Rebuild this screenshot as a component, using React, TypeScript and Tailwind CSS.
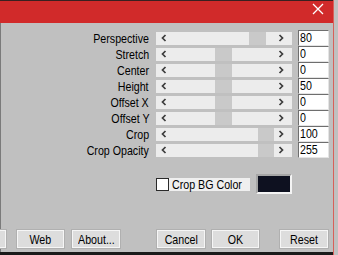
import React from "react";

const FONT = { fontFamily: '"Liberation Sans", Arial, sans-serif' };

type Row = { label: string; value: string; thumb: number; w: number };
const rows: Row[] = [
  { label: "Perspective", value: "80", thumb: 75, w: 17 },
  { label: "Stretch", value: "0", thumb: 41, w: 17 },
  { label: "Center", value: "0", thumb: 41, w: 17 },
  { label: "Height", value: "50", thumb: 41, w: 17 },
  { label: "Offset X", value: "0", thumb: 41, w: 17 },
  { label: "Offset Y", value: "0", thumb: 41, w: 17 },
  { label: "Crop", value: "100", thumb: 84, w: 16 },
  { label: "Crop Opacity", value: "255", thumb: 84, w: 16 },
];

function Slider({ thumb, w }: { thumb: number; w: number }) {
  return (
    <div className="relative w-[136px] h-[13px] bg-[#ececec] flex items-center justify-between px-[5px]">
      <div className="absolute top-0 h-[13px] bg-[#c9c9c9]" style={{ left: 18 + thumb, width: w }} />
      <svg width="6" height="8" viewBox="0 0 6 8" className="relative">
        <polyline points="4.5,1 1.5,4 4.5,7" fill="none" stroke="#3c3c3c" strokeWidth="1.7" />
      </svg>
      <svg width="6" height="8" viewBox="0 0 6 8" className="relative mr-[3px]">
        <polyline points="1.5,1 4.5,4 1.5,7" fill="none" stroke="#3c3c3c" strokeWidth="1.7" />
      </svg>
    </div>
  );
}

function Btn({ label, cls }: { label: string; cls: string }) {
  return (
    <div
      className={`h-[20px] bg-[#dddddd] border border-[#b0b0b0] shadow-[inset_1px_1px_0_#f6f6f6,inset_-1px_-1px_0_#f6f6f6] flex items-center justify-center text-[13px] text-black leading-none ${cls}`}
    >
      <span className="inline-block whitespace-nowrap scale-x-[0.82] origin-center">{label}</span>
    </div>
  );
}

export default function App() {
  return (
    <div className="w-[338px] h-[255px] bg-[#c0c0c0] overflow-hidden flex" style={FONT}>
      <div className="w-[334px] h-[255px] flex flex-col border-r border-[#d8605a]">
        <div className="h-[23px] bg-[#d12a2a] border-t border-[#3a2020] flex justify-end items-start">
          <svg width="12" height="12" viewBox="0 0 12 12" className="mt-[2px] mr-[9px]">
            <path d="M1 1 L11 11 M11 1 L1 11" stroke="#ffffff" strokeWidth="1.3" />
          </svg>
        </div>
        <div className="flex-1 flex flex-col border-l border-[#7a7a7a] pt-[7px]">
          {rows.map((r) => (
            <div key={r.label} className="h-[16px] flex items-center">
              <div className="w-[148px] text-right text-[13px] leading-none text-black">
                <span className="inline-block whitespace-nowrap scale-x-[0.82] origin-right">{r.label}</span>
              </div>
              <div className="ml-[7px]">
                <Slider thumb={r.thumb} w={r.w} />
              </div>
              <div className="ml-[6px] w-[31px] h-[16px] bg-white border-t border-l border-[#6e6e6e] border-r-[#e4e4e4] border-b-[#e4e4e4] border-r border-b text-[13px] leading-[14px] pl-[1px] text-black">
                <span className="inline-block whitespace-nowrap scale-x-[0.82] origin-left">{r.value}</span>
              </div>
            </div>
          ))}
          <div className="mt-[16px] h-[20px] flex items-center">
            <div className="ml-[155px] w-[13px] h-[13px] bg-white border border-[#2a2a2a]" />
            <div className="w-[81px] h-[13px] bg-[#efefef] text-[13px] leading-[13px] pl-[3px] text-black whitespace-nowrap">
              <span className="inline-block whitespace-nowrap scale-x-[0.82] origin-left">Crop BG Color</span>
            </div>
            <div className="ml-[6px] w-[36px] h-[20px] bg-[#0e1120] border-2 border-t-[#a6a6a6] border-l-[#a6a6a6] border-r-[#f4f4f4] border-b-[#f4f4f4]" />
          </div>
          <div className="mt-[35px] flex">
            <Btn label="" cls="w-[50px] ml-[-44px]" />
            <Btn label="Web" cls="w-[49px] ml-[9px]" />
            <Btn label="About..." cls="w-[50px] ml-[6px]" />
            <Btn label="Cancel" cls="w-[50px] ml-[35px]" />
            <Btn label="OK" cls="w-[49px] ml-[5px]" />
            <Btn label="Reset" cls="w-[50px] ml-[19px]" />
          </div>
          <div className="flex-1" />
          <div className="h-[3px] bg-[#1a1a1a] ml-[-1px]" />
        </div>
      </div>
    </div>
  );
}
